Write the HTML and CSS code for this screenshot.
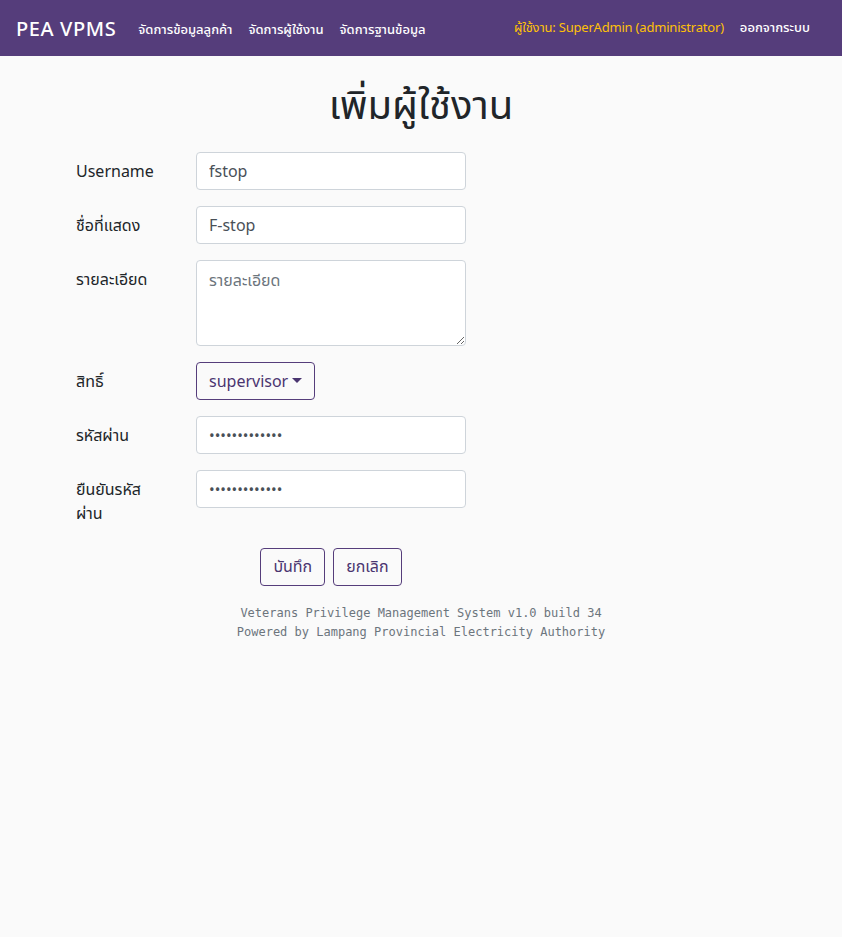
FILE: index.html
```html
<!DOCTYPE html>
<html lang="th">
<head>
<meta charset="utf-8">
<title>PEA VPMS</title>
<link rel="stylesheet" href="styles.css">
</head>
<body>
<nav class="navbar">
  <a class="brand" href="#">PEA VPMS</a>
  <ul class="nav">
    <li><a href="#">จัดการข้อมูลลูกค้า</a></li>
    <li><a href="#">จัดการผู้ใช้งาน</a></li>
    <li><a href="#">จัดการฐานข้อมูล</a></li>
  </ul>
  <div class="nav-right">
    <span class="user">ผู้ใช้งาน: SuperAdmin (administrator)</span>
    <a href="#" class="logout">ออกจากระบบ</a>
  </div>
</nav>
<main class="main">
  <h1 class="title">เพิ่มผู้ใช้งาน</h1>
  <form class="form">
    <div class="row">
      <label class="label">Username</label>
      <input class="control" type="text" value="fstop">
    </div>
    <div class="row">
      <label class="label">ชื่อที่แสดง</label>
      <input class="control" type="text" value="F-stop">
    </div>
    <div class="row">
      <label class="label">รายละเอียด</label>
      <textarea class="control area" placeholder="รายละเอียด"></textarea>
    </div>
    <div class="row">
      <label class="label">สิทธิ์</label>
      <button type="button" class="btn dropdown">supervisor <span class="caret"></span></button>
    </div>
    <div class="row">
      <label class="label">รหัสผ่าน</label>
      <input class="control pw" type="password" value="1234567890123">
    </div>
    <div class="row">
      <label class="label">ยืนยันรหัสผ่าน</label>
      <input class="control pw" type="password" value="1234567890123">
    </div>
    <div class="actions">
      <button type="button" class="btn">บันทึก</button>
      <button type="button" class="btn">ยกเลิก</button>
    </div>
  </form>
  <footer class="footer">
    <div>Veterans Privilege Management System v1.0 build 34</div>
    <div>Powered by Lampang Provincial Electricity Authority</div>
  </footer>
</main>
</body>
</html>
```
FILE: styles.css
```css
* { box-sizing: border-box; }
html, body { margin: 0; padding: 0; }
body {
  background: #fafafa;
  font-family: "Noto Sans", "Noto Sans Thai", "Noto Sans CJK SC", sans-serif;
  color: #212529;
  font-size: 16px;
  width: 842px;
  min-height: 937px;
}
.navbar {
  height: 56px;
  background: #553d7b;
  display: flex;
  align-items: center;
  padding: 0 16px;
}
.brand {
  color: #fff;
  text-decoration: none;
  font-size: 20px;
  font-weight: 500;
  letter-spacing: 0.6px;
  margin-right: 22px;
}
.nav {
  list-style: none;
  margin: 0;
  padding: 0;
  display: flex;
  gap: 16px;
}
.nav a, .logout {
  color: #fff;
  text-decoration: none;
  font-size: 13px;
  font-weight: 500;
}
.nav-right {
  margin-left: auto;
  display: flex;
  align-items: center;
  gap: 16px;
  padding-right: 16px;
}
.user {
  color: #ffc107;
  font-size: 13px;
  font-weight: 400;
  letter-spacing: -0.2px;
}
.main {
  display: flex;
  flex-direction: column;
  align-items: center;
}
.title {
  font-size: 40px;
  font-weight: 400;
  margin: 22px 0 22px;
  line-height: 52px;
}
.form {
  width: 510px;
  align-self: flex-start;
  margin-left: 76px;
  display: flex;
  flex-direction: column;
  gap: 16px;
}
.row {
  display: flex;
  align-items: flex-start;
}
.label {
  width: 80px;
  margin-right: 40px;
  font-size: 16px;
  font-weight: 400;
  line-height: 24px;
  padding-top: 7px;
}
.control {
  width: 270px;
  height: 38px;
  border: 1px solid #ced4da;
  border-radius: 4px;
  background: #fff;
  font-family: inherit;
  font-size: 16px;
  color: #495057;
  padding: 0 12px;
}
.pw { font-size: 15px; }
.area {
  height: 86px;
  padding: 8px 12px;
  resize: vertical;
}
.area::placeholder { color: #6c757d; }
.btn {
  height: 38px;
  border: 1px solid #553d7b;
  border-radius: 4px;
  background: transparent;
  color: #4a3570;
  font-family: inherit;
  font-size: 16px;
  font-weight: 400;
  padding: 0 12px;
}
.dropdown { display: flex; align-items: center; gap: 4px; }
.caret {
  display: inline-block;
  width: 0; height: 0;
  border-left: 5px solid transparent;
  border-right: 5px solid transparent;
  border-top: 5px solid #4a3570;
  margin-top: -2px;
}
.actions {
  display: flex;
  justify-content: center;
  gap: 8px;
  margin-top: 7px;
}
.footer {
  margin-top: 18px;
  text-align: center;
  font-family: "DejaVu Sans Mono", monospace;
  font-size: 12px;
  line-height: 19px;
  color: #6c757d;
}
```
